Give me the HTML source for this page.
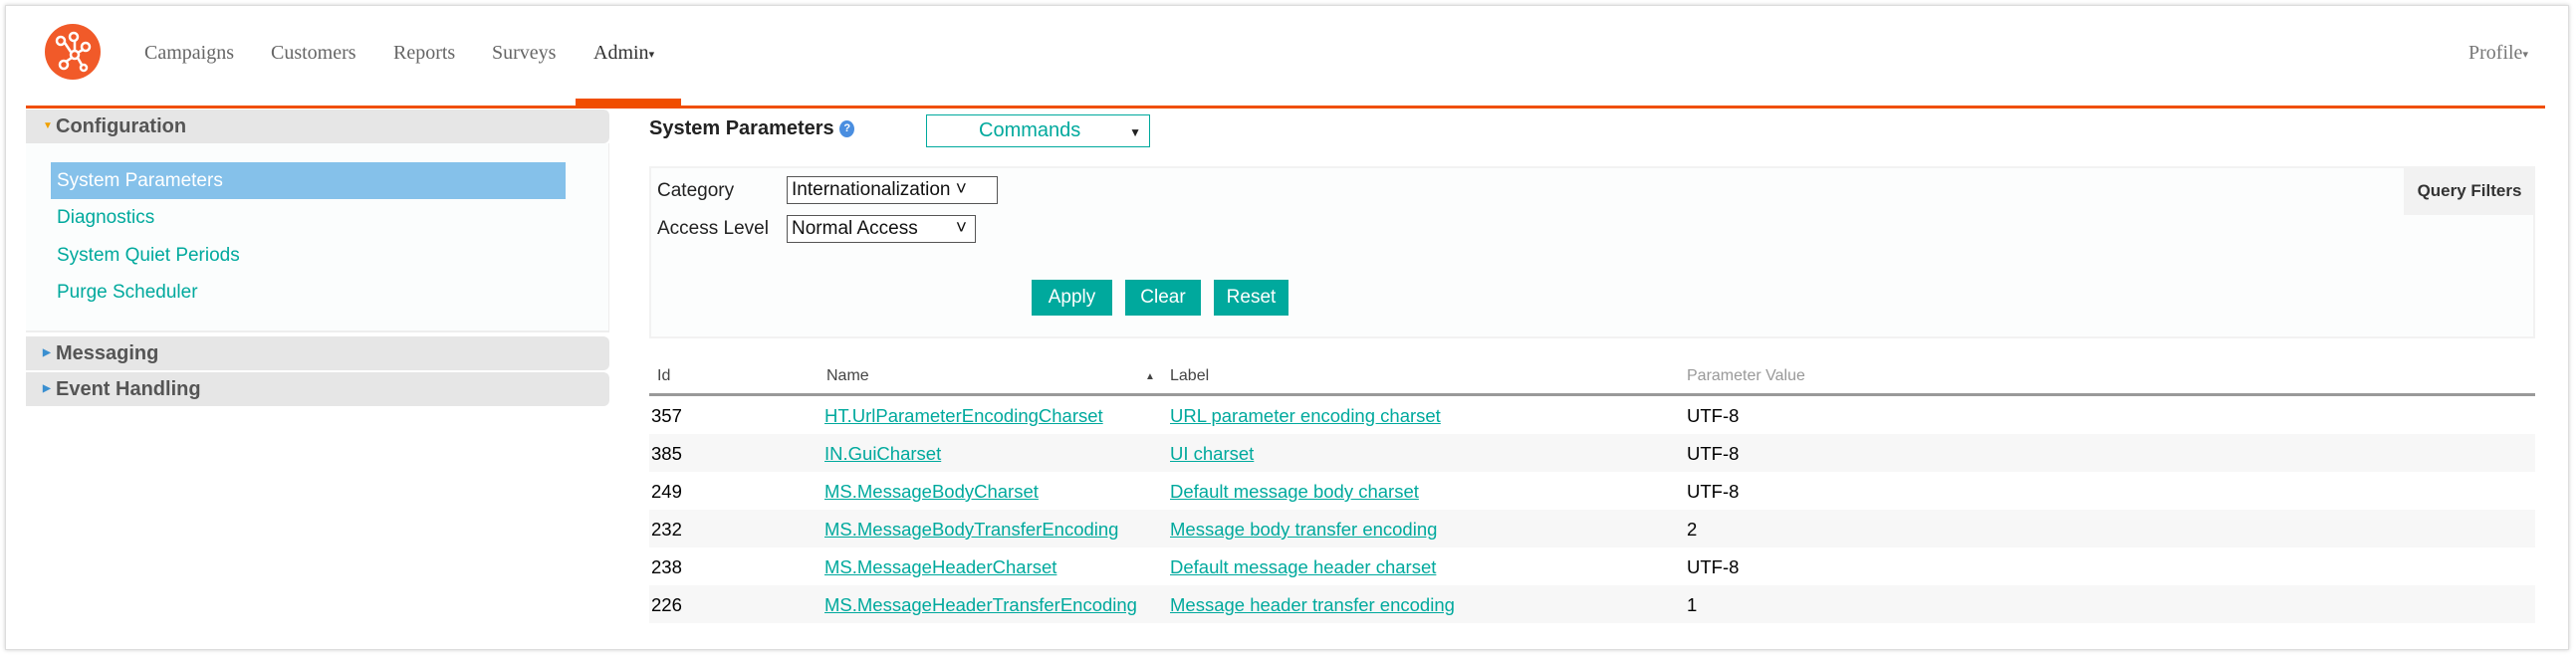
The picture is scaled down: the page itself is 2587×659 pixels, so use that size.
<!DOCTYPE html>
<html><head><meta charset="utf-8"><style>
*{box-sizing:border-box;margin:0;padding:0}
body{width:2587px;height:659px;background:#fff;font-family:"Liberation Sans",sans-serif;position:relative;overflow:hidden}
.abs{position:absolute}
.frame{left:5px;top:5px;width:2575px;height:648px;border:1px solid #ddd;box-shadow:0 0 4px #ccc}
.nav{top:42px;font-family:"Liberation Serif",serif;font-size:20px;color:#666}
.tri{font-size:11px;vertical-align:middle}
.sh{left:26px;width:586px;background:#e6e6e6;border-radius:0 6px 6px 0;font-size:20px;font-weight:bold;color:#555;padding-left:30px}
.sh i{position:absolute;left:17px;font-style:normal;font-size:10px}
.side a{position:absolute;left:57px;font-size:19px;color:#00a99d;text-decoration:none}
.lbl{font-size:19px;color:#222}
.sel{border:1px solid #555;font-size:19px;color:#111;padding:2px 4px;background:#fff}
.btn{top:281px;height:36px;background:#00a99d;color:#fff;font-size:19px;text-align:center;line-height:36px}
.th{top:369px;font-size:16px;color:#444}
.row{left:652px;width:1894px;height:38px;font-size:18.5px}
.row span{position:absolute;top:9px}
.row a{color:#00a99d;text-decoration:underline}
</style></head><body>
<div class="abs frame"></div>
<svg class="abs" style="left:44px;top:23px" width="58" height="58" viewBox="0 0 58 58"><circle cx="29" cy="29" r="28" fill="#f15a29"/><g fill="none" stroke="#fff" stroke-width="2.5"><circle cx="17" cy="18" r="4"/><circle cx="30" cy="14" r="4"/><circle cx="42" cy="24" r="4"/><circle cx="31" cy="32" r="4"/><circle cx="20" cy="42" r="4"/><circle cx="40" cy="45" r="3"/><path d="M21 20 27 29M31 18 31 28M39 27 34 30M28 35 22 39M34 35 38 42"/></g></svg>
<div class="abs nav" style="left:145px">Campaigns</div>
<div class="abs nav" style="left:272px">Customers</div>
<div class="abs nav" style="left:395px">Reports</div>
<div class="abs nav" style="left:494px">Surveys</div>
<div class="abs nav" style="left:596px;color:#333">Admin<span class="tri">▾</span></div>
<div class="abs nav" style="left:2479px;color:#777">Profile<span class="tri">▾</span></div>
<div class="abs" style="left:578px;top:99px;width:106px;height:8px;background:#f04e00"></div>
<div class="abs" style="left:26px;top:106px;width:2530px;height:3px;background:#f04e00"></div>

<div class="abs sh" style="top:110px;height:34px;line-height:34px"><i style="color:#f0a000">▼</i>Configuration</div>
<div class="abs" style="left:26px;top:144px;width:586px;height:190px;background:#fbfdfd;border-right:1px solid #eee;border-bottom:2px solid #eee"></div>
<div class="abs" style="left:51px;top:163px;width:517px;height:37px;background:#85c1ea"></div>
<div class="side">
<a style="top:171px;color:#fff">System Parameters</a>
<a style="top:208px">Diagnostics</a>
<a style="top:246px">System Quiet Periods</a>
<a style="top:283px">Purge Scheduler</a>
</div>
<div class="abs sh" style="top:338px;height:34px;line-height:34px"><i style="color:#3a8fd0">▶</i>Messaging</div>
<div class="abs sh" style="top:374px;height:34px;line-height:34px"><i style="color:#3a8fd0">▶</i>Event Handling</div>

<div class="abs" style="left:652px;top:118px;font-size:20px;font-weight:bold;color:#222">System Parameters <span style="display:inline-block;width:15px;height:17px;border-radius:50%;background:#4a8ee0;color:#fff;font-size:11px;text-align:center;line-height:17px;vertical-align:middle">?</span></div>
<div class="abs" style="left:930px;top:115px;width:225px;height:33px;border:1px solid #00a99d;color:#00a99d;font-size:20px;line-height:31px;padding-left:52px">Commands<span style="position:absolute;right:8px;color:#222;font-size:12px;top:2px">▼</span></div>

<div class="abs" style="left:652px;top:167px;width:1894px;height:173px;border:2px solid #f2f2f2;background:#fcfdfd"></div>
<div class="abs" style="left:2414px;top:167px;width:132px;height:49px;background:#f2f2f2;font-size:17px;font-weight:bold;color:#333;text-align:center;line-height:49px">Query Filters</div>
<div class="abs lbl" style="left:660px;top:181px">Category</div>
<div class="abs sel" style="left:790px;top:177px;width:212px;height:28px">Internationalization ˅</div>
<div class="abs lbl" style="left:660px;top:219px">Access Level</div>
<div class="abs sel" style="left:790px;top:216px;width:190px;height:28px">Normal Access<span style="position:absolute;right:8px">˅</span></div>
<div class="abs btn" style="left:1036px;width:81px">Apply</div>
<div class="abs btn" style="left:1130px;width:76px">Clear</div>
<div class="abs btn" style="left:1219px;width:75px">Reset</div>

<div class="abs th" style="left:660px">Id</div>
<div class="abs th" style="left:830px">Name</div>
<div class="abs th" style="left:1150px;font-size:10px;top:373px">▲</div>
<div class="abs th" style="left:1175px">Label</div>
<div class="abs th" style="left:1694px;color:#999">Parameter Value</div>
<div class="abs" style="left:652px;top:395px;width:1894px;height:3px;background:#999"></div>

<div class="abs row" style="top:398px"><span style="left:2px">357</span><span style="left:176px"><a>HT.UrlParameterEncodingCharset</a></span><span style="left:523px"><a>URL parameter encoding charset</a></span><span style="left:1042px">UTF-8</span></div>
<div class="abs row" style="top:436px;background:#f7f7f7"><span style="left:2px">385</span><span style="left:176px"><a>IN.GuiCharset</a></span><span style="left:523px"><a>UI charset</a></span><span style="left:1042px">UTF-8</span></div>
<div class="abs row" style="top:474px"><span style="left:2px">249</span><span style="left:176px"><a>MS.MessageBodyCharset</a></span><span style="left:523px"><a>Default message body charset</a></span><span style="left:1042px">UTF-8</span></div>
<div class="abs row" style="top:512px;background:#f7f7f7"><span style="left:2px">232</span><span style="left:176px"><a>MS.MessageBodyTransferEncoding</a></span><span style="left:523px"><a>Message body transfer encoding</a></span><span style="left:1042px">2</span></div>
<div class="abs row" style="top:550px"><span style="left:2px">238</span><span style="left:176px"><a>MS.MessageHeaderCharset</a></span><span style="left:523px"><a>Default message header charset</a></span><span style="left:1042px">UTF-8</span></div>
<div class="abs row" style="top:588px;background:#f7f7f7"><span style="left:2px">226</span><span style="left:176px"><a>MS.MessageHeaderTransferEncoding</a></span><span style="left:523px"><a>Message header transfer encoding</a></span><span style="left:1042px">1</span></div>
</body></html>
